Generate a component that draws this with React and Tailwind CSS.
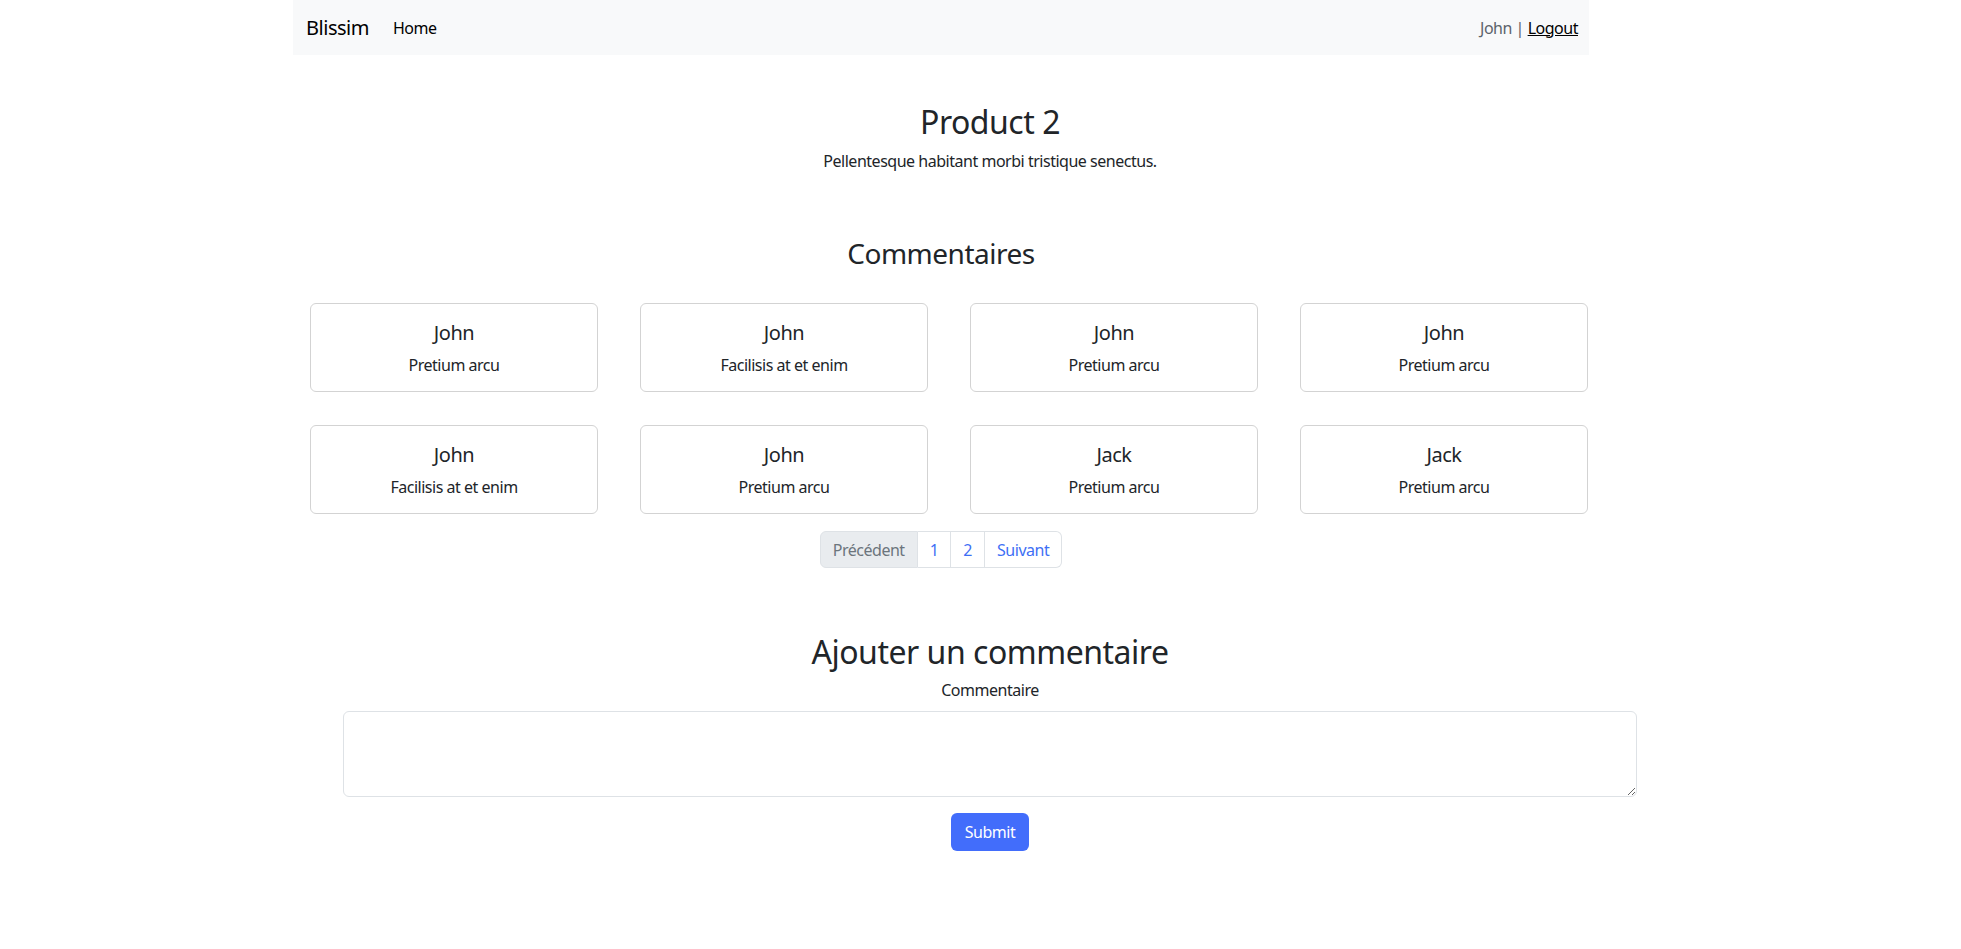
export default function App() {
  const comments = [
    ["John", "Pretium arcu"],
    ["John", "Facilisis at et enim"],
    ["John", "Pretium arcu"],
    ["John", "Pretium arcu"],
    ["John", "Facilisis at et enim"],
    ["John", "Pretium arcu"],
    ["Jack", "Pretium arcu"],
    ["Jack", "Pretium arcu"],
  ];
  return (
    <div
      className="min-h-[949px] bg-white text-[#212529] tracking-[-0.03em]"
      style={{ fontFamily: '"Noto Sans", "Open Sans", sans-serif' }}
    >
      <nav className="ml-[293px] w-[1296px] h-[55px] bg-[#f8f9fa] flex items-center justify-between pl-[13px] pr-[11px]">
        <div className="flex items-center">
          <span className="text-[20px] leading-[30px] text-black">Blissim</span>
          <span className="ml-[24px] text-[16px] leading-[24px] text-black">Home</span>
        </div>
        <div className="text-[16px] leading-[24px] text-[#5c636a]">
          John | <span className="text-black underline">Logout</span>
        </div>
      </nav>

      <section className="ml-[343px] w-[1294px] text-center">
        <h2 className="mt-[48px] text-[32px] leading-[38px] font-normal">Product 2</h2>
        <p className="mt-[8px] text-[16px] leading-[24px]">Pellentesque habitant morbi tristique senectus.</p>
      </section>

      <section className="ml-[293px] w-[1296px] text-center">
        <h3 className="mt-[63px] text-[28px] leading-[34px] font-normal">Commentaires</h3>
      </section>

      <div className="ml-[310px] mt-[33px] grid grid-cols-[repeat(4,288px)] gap-x-[42px] gap-y-[33px]">
        {comments.map(([name, text], i) => (
          <div
            key={i}
            className="h-[89px] border border-[#d3d3d3] rounded-[6px] text-center pt-[17px]"
          >
            <div className="text-[20px] leading-[24px]">{name}</div>
            <div className="mt-[8px] text-[16px] leading-[24px]">{text}</div>
          </div>
        ))}
      </div>

      <div className="ml-[293px] w-[1296px] mt-[17px] flex justify-center">
        <div className="flex h-[37px] text-[16px] leading-[24px]">
          <span className="flex items-center px-[12px] bg-[#e9ecef] text-[#6c757d] border border-[#dee2e6] rounded-l-[6px]">
            Précédent
          </span>
          <span className="flex items-center px-[12px] text-[#3e6ff5] border border-l-0 border-[#dee2e6]">1</span>
          <span className="flex items-center px-[12px] text-[#3e6ff5] border border-l-0 border-[#dee2e6]">2</span>
          <span className="flex items-center px-[12px] text-[#3e6ff5] border border-l-0 border-[#dee2e6] rounded-r-[6px]">
            Suivant
          </span>
        </div>
      </div>

      <section className="ml-[343px] w-[1294px] text-center">
        <h2 className="mt-[65px] text-[32px] leading-[38px] font-normal">Ajouter un commentaire</h2>
        <div className="mt-[7px] text-[16px] leading-[24px]">Commentaire</div>
        <textarea className="mt-[9px] block w-full h-[86px] border border-[#dee2e6] rounded-[6px] resize-y outline-none" />
        <button className="mt-[16px] w-[78px] h-[38px] rounded-[6px] bg-[#426dfb] text-white text-[16px] leading-[24px]">
          Submit
        </button>
      </section>
    </div>
  );
}
